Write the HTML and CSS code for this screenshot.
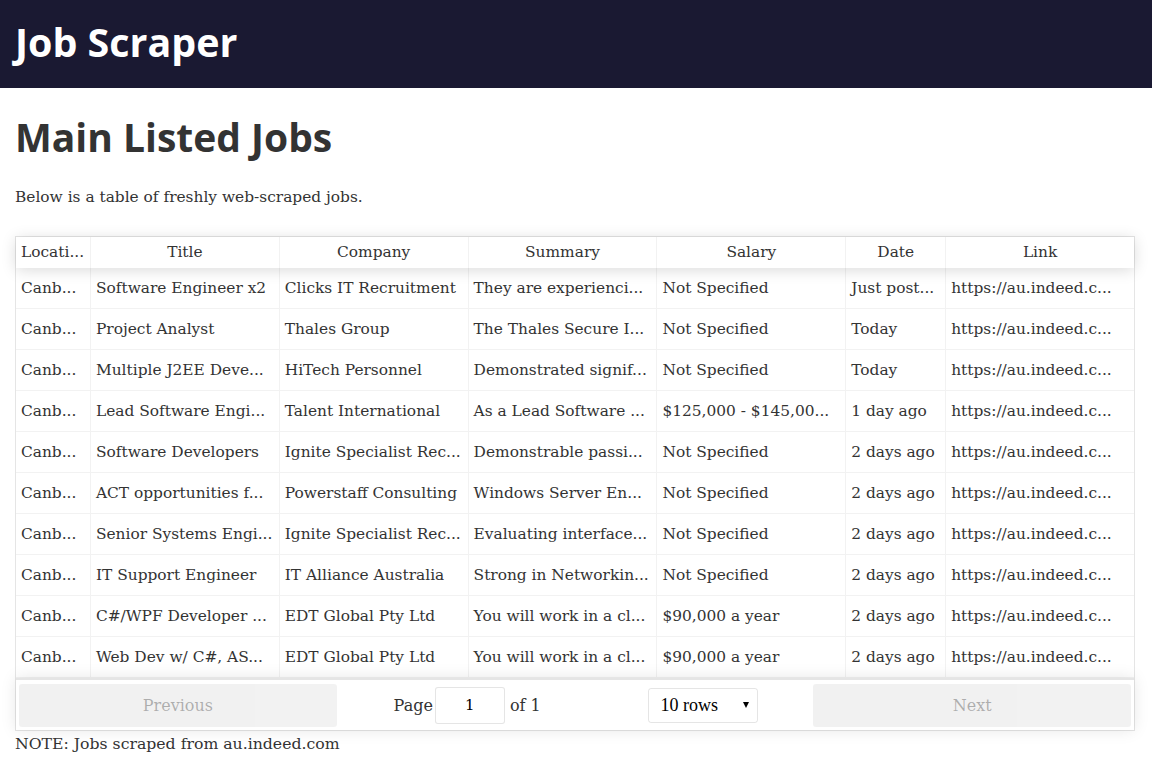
FILE: index.html
```html
<!DOCTYPE html>
<html lang="en">
<head>
<meta charset="utf-8">
<title>Job Scraper</title>
<link rel="stylesheet" href="styles.css">
</head>
<body>
<header class="topbar"><div class="brand">Job Scraper</div></header>
<main class="content">
  <h1 class="page-title">Main Listed Jobs</h1>
  <p class="intro">Below is a table of freshly web-scraped jobs.</p>
  <div class="rt">
    <div class="rt-thead">
      <div class="rt-tr">
        <div class="c c-loc th">Locati...</div>
        <div class="c c-w th">Title</div>
        <div class="c c-w th">Company</div>
        <div class="c c-w th">Summary</div>
        <div class="c c-w th">Salary</div>
        <div class="c c-date th">Date</div>
        <div class="c c-w th">Link</div>
      </div>
    </div>
    <div class="rt-tbody">
      <div class="rt-tr row"><div class="c c-loc">Canb...</div><div class="c c-w">Software Engineer x2</div><div class="c c-w">Clicks IT Recruitment</div><div class="c c-w">They are experienci...</div><div class="c c-w">Not Specified</div><div class="c c-date">Just post...</div><div class="c c-w">https://au.indeed.c...</div></div>
      <div class="rt-tr row"><div class="c c-loc">Canb...</div><div class="c c-w">Project Analyst</div><div class="c c-w">Thales Group</div><div class="c c-w">The Thales Secure I...</div><div class="c c-w">Not Specified</div><div class="c c-date">Today</div><div class="c c-w">https://au.indeed.c...</div></div>
      <div class="rt-tr row"><div class="c c-loc">Canb...</div><div class="c c-w">Multiple J2EE Deve...</div><div class="c c-w">HiTech Personnel</div><div class="c c-w">Demonstrated signif...</div><div class="c c-w">Not Specified</div><div class="c c-date">Today</div><div class="c c-w">https://au.indeed.c...</div></div>
      <div class="rt-tr row"><div class="c c-loc">Canb...</div><div class="c c-w">Lead Software Engi...</div><div class="c c-w">Talent International</div><div class="c c-w">As a Lead Software ...</div><div class="c c-w">$125,000 - $145,00...</div><div class="c c-date">1 day ago</div><div class="c c-w">https://au.indeed.c...</div></div>
      <div class="rt-tr row"><div class="c c-loc">Canb...</div><div class="c c-w">Software Developers</div><div class="c c-w">Ignite Specialist Rec...</div><div class="c c-w">Demonstrable passi...</div><div class="c c-w">Not Specified</div><div class="c c-date">2 days ago</div><div class="c c-w">https://au.indeed.c...</div></div>
      <div class="rt-tr row"><div class="c c-loc">Canb...</div><div class="c c-w">ACT opportunities f...</div><div class="c c-w">Powerstaff Consulting</div><div class="c c-w">Windows Server En...</div><div class="c c-w">Not Specified</div><div class="c c-date">2 days ago</div><div class="c c-w">https://au.indeed.c...</div></div>
      <div class="rt-tr row"><div class="c c-loc">Canb...</div><div class="c c-w">Senior Systems Engi...</div><div class="c c-w">Ignite Specialist Rec...</div><div class="c c-w">Evaluating interface...</div><div class="c c-w">Not Specified</div><div class="c c-date">2 days ago</div><div class="c c-w">https://au.indeed.c...</div></div>
      <div class="rt-tr row"><div class="c c-loc">Canb...</div><div class="c c-w">IT Support Engineer</div><div class="c c-w">IT Alliance Australia</div><div class="c c-w">Strong in Networkin...</div><div class="c c-w">Not Specified</div><div class="c c-date">2 days ago</div><div class="c c-w">https://au.indeed.c...</div></div>
      <div class="rt-tr row"><div class="c c-loc">Canb...</div><div class="c c-w">C#/WPF Developer ...</div><div class="c c-w">EDT Global Pty Ltd</div><div class="c c-w">You will work in a cl...</div><div class="c c-w">$90,000 a year</div><div class="c c-date">2 days ago</div><div class="c c-w">https://au.indeed.c...</div></div>
      <div class="rt-tr row"><div class="c c-loc">Canb...</div><div class="c c-w">Web Dev w/ C#, AS...</div><div class="c c-w">EDT Global Pty Ltd</div><div class="c c-w">You will work in a cl...</div><div class="c c-w">$90,000 a year</div><div class="c c-date">2 days ago</div><div class="c c-w">https://au.indeed.c...</div></div>
    </div>
    <div class="pagination">
      <div class="pg-side"><button class="pg-btn" disabled>Previous</button></div>
      <div class="pg-center">
        <span class="pg-info">Page <input class="pg-jump" type="text" value="1"> of 1</span>
        <span class="pg-size"><span class="sel">10 rows<span class="sel-arrow"></span></span></span>
      </div>
      <div class="pg-side"><button class="pg-btn" disabled>Next</button></div>
    </div>
  </div>
  <div class="note">NOTE: Jobs scraped from au.indeed.com</div>
</main>
</body>
</html>
```
FILE: styles.css
```css
html, body {
  margin: 0;
  padding: 0;
  background: #fff;
}
body {
  font-family: "DejaVu Serif", "Liberation Serif", serif;
  color: #333;
}
.topbar {
  background: #1a1932;
  height: 88px;
  display: flex;
  align-items: center;
  padding: 0 15px;
}
.brand {
  font-family: "Open Sans", "Noto Sans", sans-serif;
  font-weight: 700;
  font-size: 39.4px;
  color: #fff;
  margin-top: -4px;
}
.content {
  padding: 0 17px 0 15px;
}
.page-title {
  font-family: "Open Sans", "Noto Sans", sans-serif;
  font-weight: 700;
  font-size: 39px;
  color: #333;
  margin: 21px 0 0 0;
  line-height: 56px;
}
.intro {
  font-size: 15.4px;
  margin: 22px 0 29px 0;
  line-height: 20px;
}
.rt {
  border: 1px solid rgba(0,0,0,0.1);
  font-size: 15.4px;
}
.rt-thead {
  box-shadow: 0 2px 15px 0 rgba(0,0,0,0.15);
  position: relative;
  z-index: 1;
}
.rt-tr {
  display: flex;
}
.c {
  box-sizing: border-box;
  padding: 0 5px;
  white-space: nowrap;
  overflow: hidden;
  text-overflow: ellipsis;
  border-right: 1px solid rgba(0,0,0,0.05);
}
.c:last-child { border-right: 0; }
.c-loc { width: 75px; }
.c-w { width: 189px; }
.c-date { width: 100px; }
.c-w:last-child { width: 188px; }
.th {
  height: 31px;
  line-height: 31px;
  text-align: center;
}
.c-loc.th { text-align: left; }
.row {
  height: 41px;
  box-sizing: border-box;
  border-bottom: 1px solid rgba(0,0,0,0.05);
}
.row .c {
  line-height: 40px;
}
.pagination {
  display: flex;
  padding: 3px;
  border-top: 2px solid rgba(0,0,0,0.1);
  box-shadow: 0 0 15px 0 rgba(0,0,0,0.1);
  position: relative;
  z-index: 1;
}
.pg-side {
  flex: 1;
  display: flex;
}
.pg-btn {
  flex: 1;
  appearance: none;
  border: 0;
  border-radius: 3px;
  background: rgba(0,0,0,0.1);
  color: rgba(0,0,0,0.6);
  opacity: 0.5;
  font-family: inherit;
  font-size: 16px;
  height: 43px;
  margin: 1px 0 0 0;
  padding: 6px;
}
.pg-center {
  flex: 1.5;
  display: flex;
  align-items: center;
  justify-content: space-around;
  font-size: 16px;
}
.pg-info {
  white-space: nowrap;
  display: flex;
  align-items: center;
  margin-left: 12px;
}
.pg-jump {
  width: 70px;
  height: 37px;
  box-sizing: border-box;
  margin: 0 5px 0 2px;
  border: 1px solid rgba(0,0,0,0.1);
  border-radius: 3px;
  text-align: center;
  font-family: inherit;
  font-size: 15px;
  color: #000;
  outline: none;
}
.pg-size {
  margin-left: 18px;
  margin-right: 10px;
}
.sel {
  display: flex;
  align-items: center;
  width: 110px;
  height: 35px;
  box-sizing: border-box;
  border: 1px solid rgba(0,0,0,0.1);
  border-radius: 3px;
  padding: 0 11px;
  font-family: "Liberation Serif", serif;
  font-size: 18px;
  color: #000;
  position: relative;
}
.sel-arrow {
  position: absolute;
  right: 8px;
  top: 13px;
  width: 0;
  height: 0;
  border-left: 3px solid transparent;
  border-right: 3px solid transparent;
  border-top: 6px solid #000;
}
.note {
  font-size: 15.7px;
  margin-top: 3px;
  line-height: 20px;
}
```
